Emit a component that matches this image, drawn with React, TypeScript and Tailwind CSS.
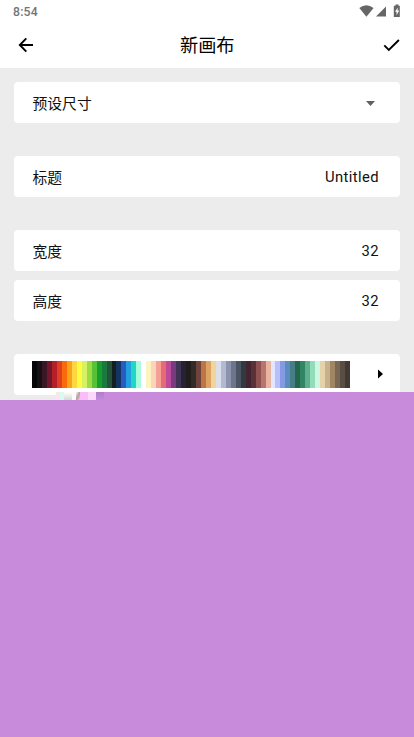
import React from "react";

const palette = "060608 141013 3b1725 73172d b4202a df3e23 fa6a0a f9a31b ffd541 fffc40 d6f264 9cdb43 59c135 14a02e 1a7a3e 24523b 122020 143464 285cc4 249fde 20d6c7 a6fcdb ffffff fef3c0 fad6b8 f5a097 e86a73 bc4a9b 793a80 403353 242234 221c1a 322b28 71413b bb7547 dba463 f4d29c dae0ea b3b9d1 8b93af 6d758d 4a5462 333941 422433 5b3138 8e5252 ba756a e9b5a3 e3e6ff b9bffb 849be4 588dbe 477d85 23674e 328464 5daf8d 92dcba cdf7e2 e4d2aa c7b08b a08662 796755 5a4e44 423934".split(" ");

function Row({ label, children, className = "" }: { label: string; children: React.ReactNode; className?: string }) {
  return (
    <div className={`flex h-[41px] shrink-0 items-center justify-between rounded-[4px] bg-white pl-[18.5px] pr-[21px] text-[14.8px] leading-[22px] text-[#111] ${className}`}>
      <span className="pt-[2px]">{label}</span>
      {children}
    </div>
  );
}

export default function App() {
  return (
    <div className="relative flex h-[737px] w-[414px] flex-col overflow-hidden bg-[#ececec] font-[Roboto,'Noto_Sans_CJK_SC',sans-serif]">
      <header className="h-[68px] shrink-0 bg-white">
        <div className="flex h-6 items-center justify-between pl-[13px] pr-[13px] text-[12.2px] font-medium tracking-[0.2px] text-[#747474]">
          <span>8:54</span>
          <svg className="-mt-[2px]" width="42" height="14" viewBox="0 0 42 14" fill="#666">
            <path d="M0.3 4Q7.3-1.6 14.6 4L7.4 12.7Z" />
            <path d="M27 2.5V12.5H17Z" />
            <path fillRule="evenodd" d="M36.5 0.5h3v1.2h1.3v11.3h-6V1.7h1.7zM38.6 3.5l-2.5 4.3h1.5V11.3l2.6-4.8h-1.6z" />
          </svg>
        </div>
        <div className="flex h-[43px] items-center justify-between pl-[18px] pr-[13.5px]">
          <svg className="-mt-[2px]" width="16" height="16" viewBox="0 0 16 16" fill="none" stroke="#000" strokeWidth="1.9">
            <path d="M15 8H2M8.3 1.3L1.8 8l6.5 6.7" />
          </svg>
          <h1 className="-ml-[3px] pt-px text-[18.2px] leading-6 text-black">新画布</h1>
          <svg width="17" height="13" viewBox="0 0 17 13" fill="none" stroke="#000" strokeWidth="1.9">
            <path d="M1.3 6.4l4.5 4.5L15.9 1" />
          </svg>
        </div>
      </header>
      <main className="flex flex-col px-[14px] pt-[14px]">
        <Row label="预设尺寸">
          <svg className="mr-[4px] mt-px" width="9" height="5" viewBox="0 0 10 5" preserveAspectRatio="none" fill="#606060"><path d="M0 0h10L5 5z" /></svg>
        </Row>
        <Row label="标题" className="mt-[33px]"><span className="tracking-[0.4px]">Untitled</span></Row>
        <Row label="宽度" className="mt-[33px]"><span className="tracking-[0.4px]">32</span></Row>
        <Row label="高度" className="mt-[9px]"><span className="pt-px tracking-[0.4px]">32</span></Row>
        <div className="mt-[33px] flex h-[41px] items-center justify-between rounded-[4px] bg-white pl-[18px] pr-[17px]">
          <div className="flex h-[27px] w-[318px]">
            {palette.map((c, i) => <i key={i} className="flex-1" style={{ backgroundColor: `#${c}` }} />)}
          </div>
          <svg className="-mt-px" width="5" height="10" viewBox="0 0 5 10"><path d="M0 0.5L5 5 0 9.5z" /></svg>
        </div>
      </main>
      <div className="absolute inset-x-0 bottom-0 top-[400px] bg-[#c88bdc]" />
      <div className="absolute right-0 top-[392px] h-2 w-[310px] bg-[#c88bdc]" />
      <div className="absolute left-[56px] top-[392px] flex h-2 w-12">
        <i className="w-1 bg-[#fbe6ef]" />
        <i className="w-1 bg-[#d9fbee]" />
        <i className="w-2 bg-linear-to-b from-white to-[#d3dad3]" />
        <i className="w-1 bg-[#fffafa]" />
        <i className="w-1 bg-linear-to-br from-white via-[#b99b9b] to-[#ffc8f4]" />
        <i className="w-2 bg-[#fabdfa]" />
        <i className="w-2 bg-[#fcd9fc]" />
        <i className="w-2 bg-linear-to-b from-[#b47bcb] to-[#c28bdc]" />
      </div>
    </div>
  );
}
